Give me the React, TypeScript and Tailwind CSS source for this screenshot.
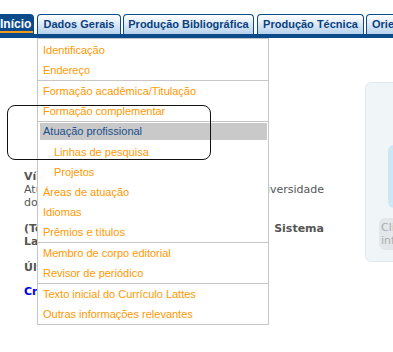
import React from "react";

type MenuItem = { label: string; indent?: boolean; active?: boolean };

const sections: MenuItem[][] = [
  [{ label: "Identificação" }, { label: "Endereço" }],
  [{ label: "Formação acadêmica/Titulação" }, { label: "Formação complementar" }],
  [
    { label: "Atuação profissional", active: true },
    { label: "Linhas de pesquisa", indent: true },
    { label: "Projetos", indent: true },
    { label: "Áreas de atuação" },
    { label: "Idiomas" },
    { label: "Prêmios e títulos" },
  ],
  [{ label: "Membro de corpo editorial" }, { label: "Revisor de periódico" }],
  [{ label: "Texto inicial do Currículo Lattes" }, { label: "Outras informações relevantes" }],
];

const sansFont = { fontFamily: '"Liberation Sans", Arial, sans-serif' };
const bodyFont = { fontFamily: '"DejaVu Sans", Verdana, sans-serif' };

function Tab({ label, className }: { label: string; className: string }) {
  return (
    <div
      className={`h-[20px] shrink-0 flex items-center justify-center rounded-t-[4px] border border-b-0 border-[#0b4a8b] bg-gradient-to-b from-white to-[#b7d2ec] text-[11px] font-bold text-[#0a3f80] whitespace-nowrap overflow-hidden ${className}`}
    >
      {label}
    </div>
  );
}

function Menu() {
  return (
    <div
      className="absolute left-[37px] top-[38px] w-[232px] border border-[#c6c6c6] bg-white pt-[1px] text-[11px]"
      style={sansFont}
    >
      {sections.map((items, i) => (
        <div key={i} className={i > 0 ? "border-t border-[#c6c6c6]" : ""}>
          {items.map((item) =>
            item.active ? (
              <div key={item.label} className="h-[20px] pl-[2px] pr-[1px] pt-[1px]">
                <div className="h-[17px] bg-[#c9c9c9] pl-[3px] flex items-center text-[#1b4e8c]">
                  {item.label}
                </div>
              </div>
            ) : (
              <div
                key={item.label}
                className={`h-[20px] flex items-center text-[#ff9900] ${item.indent ? "pl-[16px]" : "pl-[5px]"}`}
              >
                {item.label}
              </div>
            )
          )}
        </div>
      ))}
    </div>
  );
}

export default function App() {
  return (
    <div className="relative w-full h-[352px] overflow-hidden bg-white">
      {/* tab bar */}
      <div className="pt-[14px] flex items-end overflow-hidden" style={sansFont}>
        <div className="w-[34px] h-[20px] shrink-0 rounded-tr-[4px] bg-[#0b4a8b] flex items-center text-[12px] font-bold text-white">
          <span className="border-b-2 border-[#f39a1e] leading-[14px] pt-[2px] pr-[2px]">Início</span>
        </div>
        <Tab label="Dados Gerais" className="ml-[3px] w-[84px]" />
        <Tab label="Produção Bibliográfica" className="ml-[2px] w-[131px]" />
        <Tab label="Produção Técnica" className="ml-[3px] w-[107px]" />
        <Tab label="Orientações" className="ml-[2px] w-[80px] justify-start pl-[5px]" />
      </div>
      <div className="h-[4px] bg-[#0b4a8b]" />

      {/* page body */}
      <div className="flex text-[11px] leading-[13px] text-[#555]" style={bodyFont}>
        <div className="ml-[24px] w-[300px] shrink-0 pt-[132px] whitespace-nowrap">
          <div className="font-bold">Vínculo institucional</div>
          <div className="flex justify-between">
            <span>Atua como professor</span>
            <span>Universidade</span>
          </div>
          <div>do Estado</div>
          <div className="mt-[13px] flex justify-between font-bold">
            <span>(Texto gerado</span>
            <span>Sistema</span>
          </div>
          <div className="font-bold">Lattes)</div>
          <div className="mt-[13px] font-bold">Última atualização do currículo</div>
          <div className="mt-[11px] font-bold text-[#0000ee]">Criado em</div>
        </div>
        <div className="ml-[41px] mt-[44px] w-[140px] h-[180px] shrink-0 rounded-[6px] border border-[#e0e9ee] bg-[#f0f5f8]">
          <div className="ml-[22px] mt-[62px] h-[63px] rounded-[6px] bg-[#cbe8f8]" />
          <div className="ml-[13px] mt-[10px] h-[32px] overflow-hidden whitespace-nowrap rounded-[6px] bg-[#e3e7ea] pl-[2px] pt-[3px] text-[#a5adb2]">
            <div>Clique aqui</div>
            <div>informações</div>
          </div>
        </div>
      </div>

      <Menu />

      {/* annotation outline */}
      <div className="absolute left-[7px] top-[105px] w-[204px] h-[55px] rounded-[8px] border border-[#111]" />
    </div>
  );
}
